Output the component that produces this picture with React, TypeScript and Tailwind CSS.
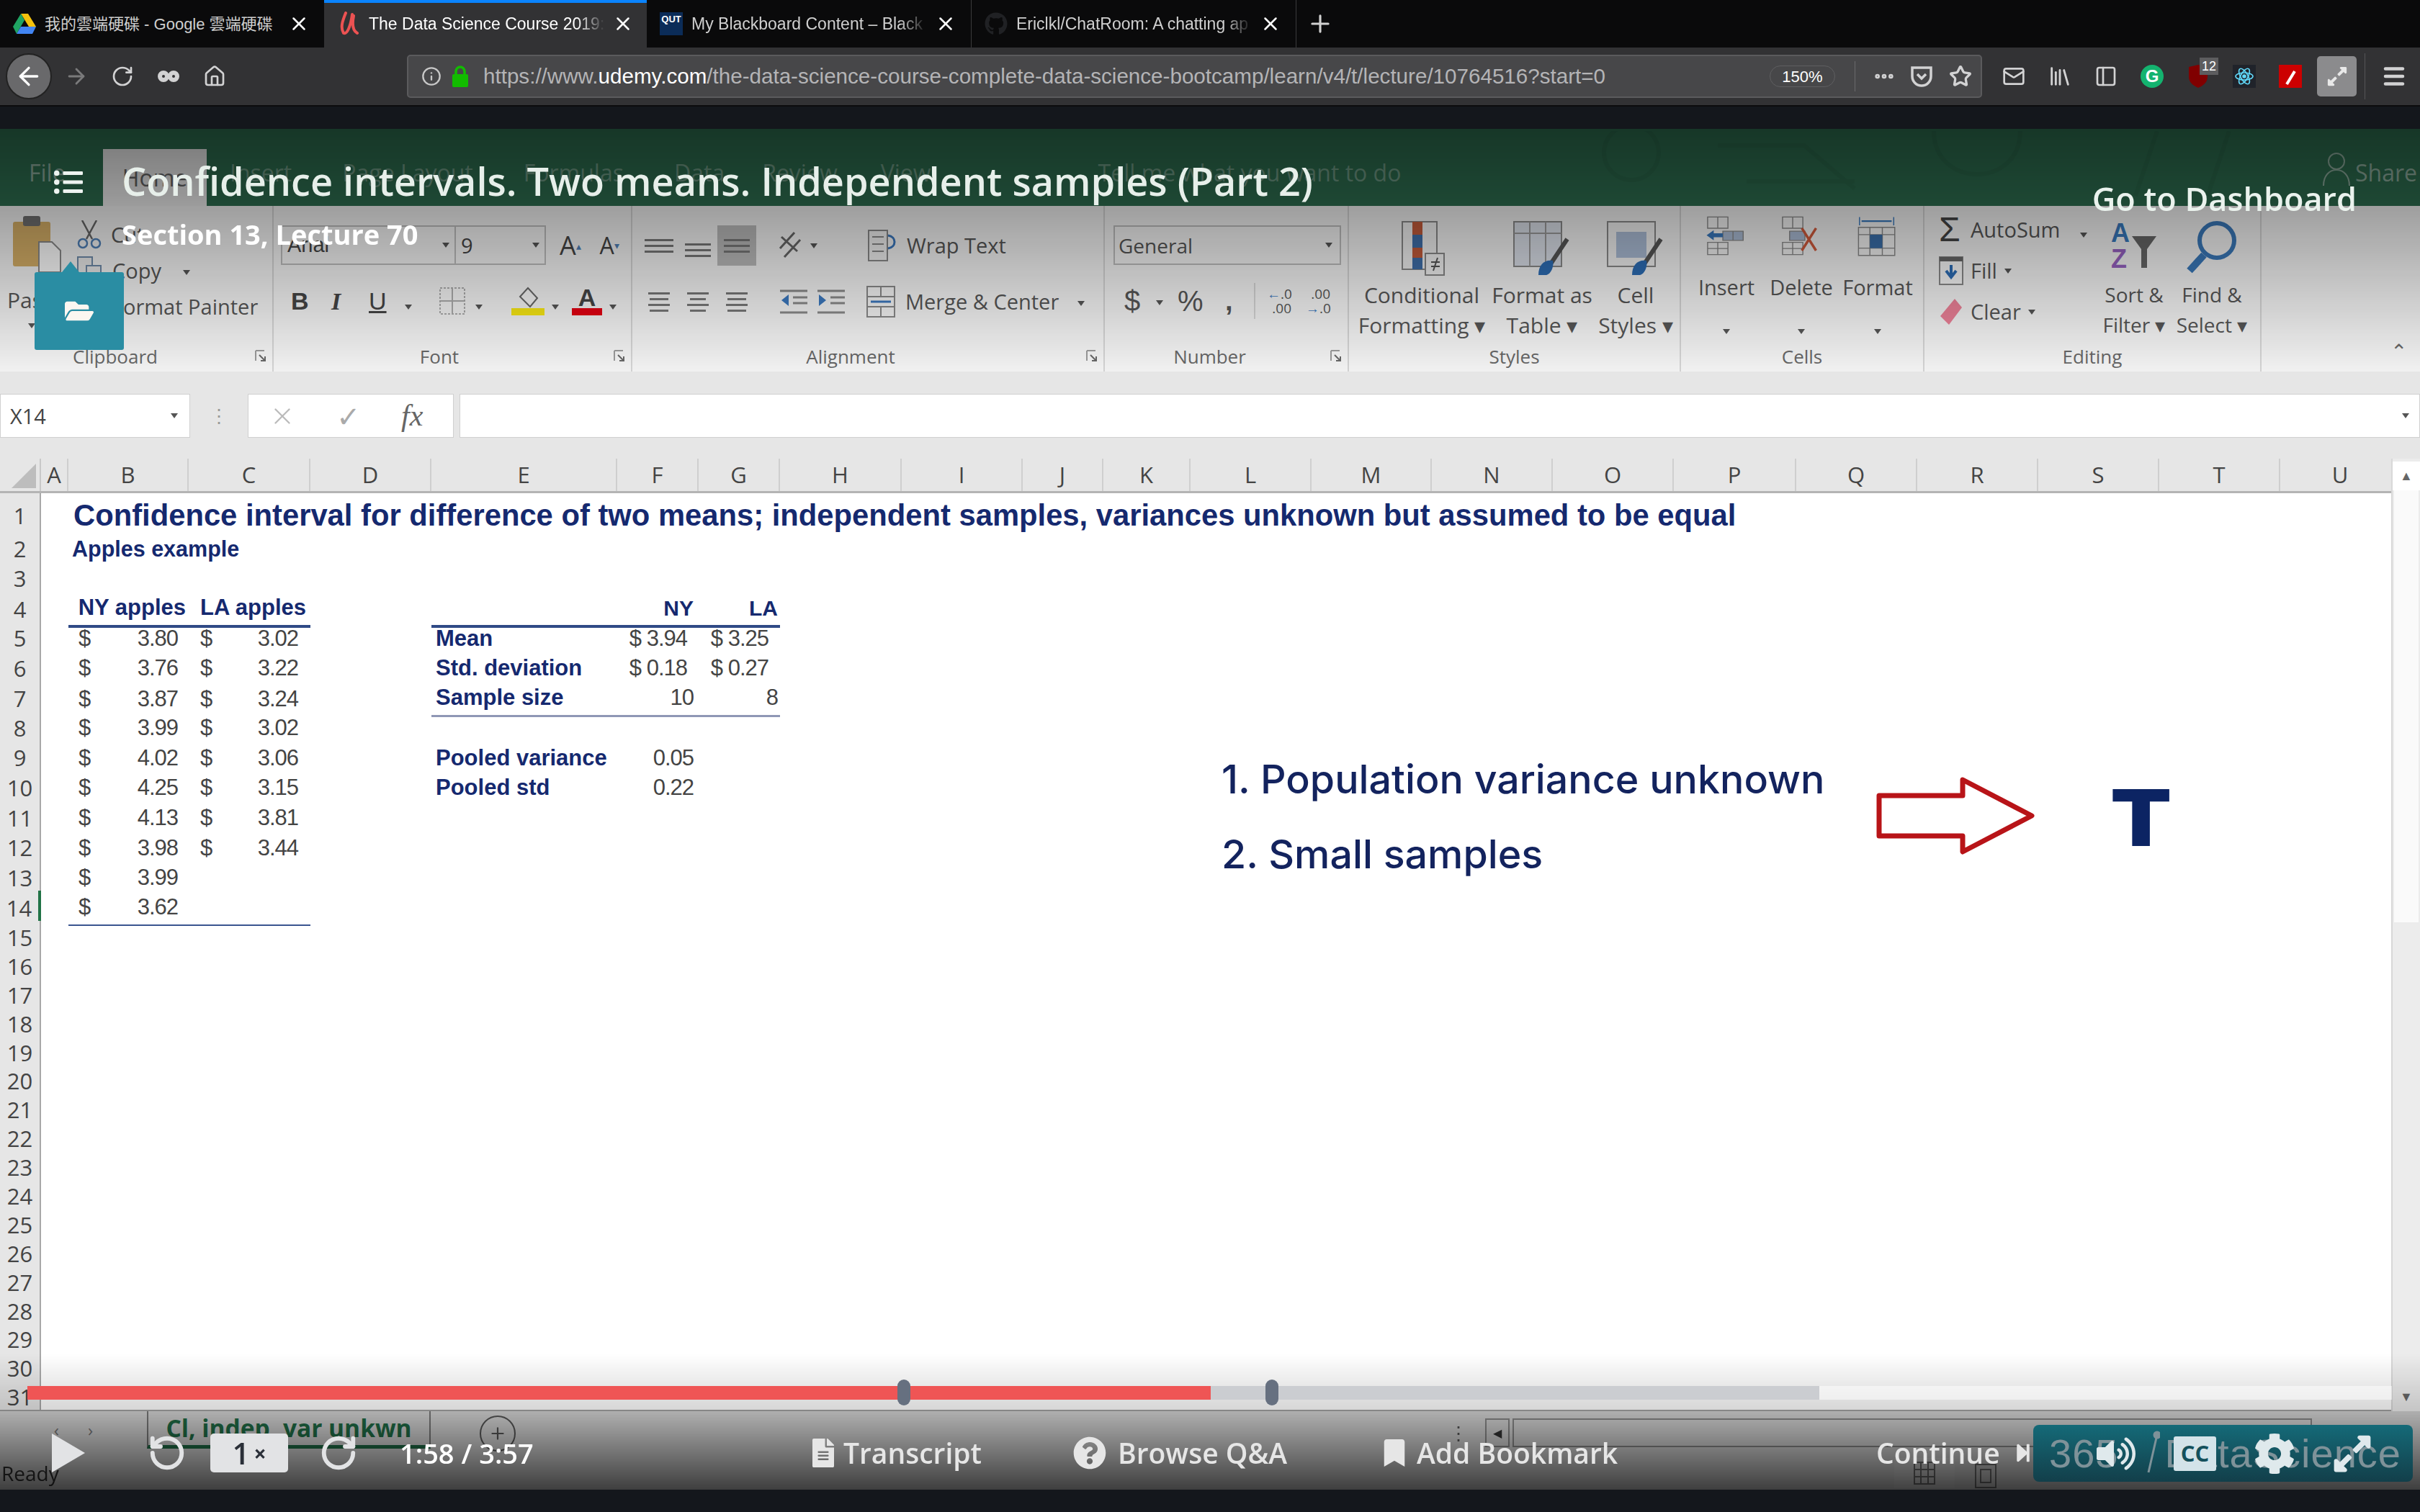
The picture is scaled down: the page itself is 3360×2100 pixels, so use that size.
import type { ReactNode } from 'react';
import { ArrowLeft, ArrowRight, Ellipsis, Home, Info, Library, Mail, Menu, PanelLeft, Plus, RotateCcw, RotateCw, Star, X } from 'lucide-react';
import { FaBookmark, FaCog, FaExpandAlt, FaFileAlt, FaFolderOpen, FaGithub, FaListUl, FaQuestionCircle, FaStepForward, FaVolumeUp } from 'react-icons/fa';

const COLS = 'grid-cols-[57px_38px_167px_169px_168px_258px_113px_113px_1fr]';

const colHeads = [
  ['A', 'w-[38px]'], ['B', 'w-[167px]'], ['C', 'w-[169px]'], ['D', 'w-[168px]'], ['E', 'w-[258px]'], ['F', 'w-[113px]'], ['G', 'w-[113px]'],
  ['H', 'w-[169px]'], ['I', 'w-[168px]'], ['J', 'w-[112px]'], ['K', 'w-[121px]'], ['L', 'w-[168px]'], ['M', 'w-[167px]'], ['N', 'w-[168px]'],
  ['O', 'w-[168px]'], ['P', 'w-[170px]'], ['Q', 'w-[168px]'], ['R', 'w-[168px]'], ['S', 'w-[168px]'], ['T', 'w-[168px]'], ['U', 'w-[168px]'],
];

const apples = [
  ['3.80', '3.02'], ['3.76', '3.22'], ['3.87', '3.24'], ['3.99', '3.02'], ['4.02', '3.06'],
  ['4.25', '3.15'], ['4.13', '3.81'], ['3.98', '3.44'], ['3.99', ''], ['3.62', ''],
];

const stats: Record<number, string[]> = {
  5: ['Mean', '$ 3.94', '$ 3.25'],
  6: ['Std. deviation', '$ 0.18', '$ 0.27'],
  7: ['Sample size', '10', '8'],
  9: ['Pooled variance', '0.05', ''],
  10: ['Pooled std', '0.22', ''],
};

const rowHeights = (n: number) => {
  if (n === 1) return 'h-[54px] pb-[6px]';
  if (n === 4) return 'h-[42px]';
  if (n < 4) return 'h-[41px]';
  if (n < 15) return 'h-[41.6px]';
  return 'h-[39.9px]';
};

function Caret() {
  return <span className="inline-block w-0 h-0 border-x-[5px] border-x-transparent border-t-[7px] border-t-[#555]" />;
}

function Lines({ rows, active }: { rows: string[]; active?: boolean }) {
  return (
    <div className={`w-[54px] h-[56px] flex flex-col justify-center gap-[5px] items-center ${active ? 'bg-[#b9b9b9]' : ''}`}>
      {rows.map((r, i) => (
        <div key={i} className={`h-[3px] bg-[#777] ${r}`} />
      ))}
    </div>
  );
}

function GroupLabel({ name, launcher, cls }: { name: string; launcher?: boolean; cls?: string }) {
  return (
    <div className="h-[42px] relative flex items-center justify-center text-[26px] text-[#666]">
      <span className={cls}>{name}</span>
      {launcher && (
        <svg className="absolute right-[8px] top-[12px]" width="16" height="18" viewBox="0 0 16 18">
          <path d="M1 1h12M1 1v14" stroke="#999" strokeWidth="2" fill="none" />
          <path d="M6 7l8 8M14 9v6H8" stroke="#666" strokeWidth="2" fill="none" />
        </svg>
      )}
    </div>
  );
}

function Group({ w, children, name, launcher, cls }: { w: string; children: ReactNode; name: string; launcher?: boolean; cls?: string }) {
  return (
    <div className={`${w} h-full flex flex-col border-r-2 border-[#d2d2d2]`}>
      <div className="flex-1 min-h-0">{children}</div>
      <GroupLabel name={name} launcher={launcher} cls={cls} />
    </div>
  );
}

function Clipboard() {
  return (
    <div className="h-full flex">
      <div className="w-[100px] pl-[14px] pt-[12px] flex flex-col">
        <svg width="76" height="90" viewBox="0 0 76 90">
          <rect x="4" y="10" width="52" height="62" rx="3" fill="#d3ad66" />
          <rect x="18" y="2" width="24" height="14" rx="3" fill="#6f6f6f" />
          <path d="M40 38h18l12 12v30H40z" fill="#fafafa" stroke="#888" strokeWidth="2" />
        </svg>
        <span className="text-[30px] leading-[34px] mt-[12px] -ml-[4px] text-[#555]">Paste</span>
        <span className="ml-[25px] mt-[8px] leading-none"><Caret /></span>
      </div>
      <div className="pt-[18px] pl-[6px] flex flex-col gap-[6px]">
        <div className="h-[44px] flex items-center gap-[12px]">
          <svg width="36" height="40" viewBox="0 0 36 40" fill="none" stroke="#666" strokeWidth="2.5">
            <path d="M8 0l14 26M28 0L14 26" />
            <circle cx="9" cy="32" r="6" stroke="#4f7fb5" />
            <circle cx="27" cy="32" r="6" stroke="#4f7fb5" />
          </svg>
          <span className="text-[29px] text-[#555]">Cut</span>
        </div>
        <div className="h-[44px] flex items-center gap-[14px]">
          <svg width="36" height="42" viewBox="0 0 36 42" fill="#e8e8e8" stroke="#6f8aa8" strokeWidth="2">
            <rect x="2" y="2" width="20" height="26" />
            <rect x="14" y="14" width="20" height="26" />
          </svg>
          <span className="text-[29px] text-[#555]">Copy</span>
          <span className="ml-[16px]"><Caret /></span>
        </div>
        <div className="h-[44px] flex items-center gap-[14px]">
          <svg width="36" height="42" viewBox="0 0 36 42" fill="none" stroke="#666" strokeWidth="4">
            <path d="M8 36L28 6" />
          </svg>
          <span className="text-[29px] text-[#555]">Format Painter</span>
        </div>
      </div>
    </div>
  );
}

function FontGroup() {
  return (
    <div className="h-full pt-[27px] pl-[10px] flex flex-col text-[#444]">
      <div className="flex items-center h-[55px]">
        <div className="w-[243px] h-full border-2 border-[#bbb] flex items-center justify-between px-[7px]">
          <span className="text-[29px] font-['Liberation_Sans']">Arial</span>
          <Caret />
        </div>
        <div className="w-[125px] h-full border-2 border-l-0 border-[#bbb] flex items-center justify-between px-[7px]">
          <span className="text-[29px]">9</span>
          <Caret />
        </div>
        <span className="ml-[12px] w-[44px] text-[36px] text-center">A<sup className="text-[#4f7fb5] text-[14px]">▴</sup></span>
        <span className="ml-[10px] w-[44px] text-[32px] text-center">A<sup className="text-[#4f7fb5] text-[14px]">▾</sup></span>
      </div>
      <div className="flex items-center h-[50px] mt-[25px] font-['Liberation_Sans'] text-[34px]">
        <span className="ml-[14px] w-[36px] font-bold">B</span>
        <span className="ml-[20px] w-[30px] italic font-['Liberation_Serif'] font-bold">I</span>
        <span className="ml-[22px] w-[24px] underline">U</span>
        <span className="ml-[26px]"><Caret /></span>
        <svg className="ml-[38px]" width="36" height="38" viewBox="0 0 36 38" fill="none" stroke="#aaa" strokeWidth="2">
          <rect x="1" y="1" width="34" height="36" strokeDasharray="3 2" />
          <path d="M18 1v36M1 19h34" />
        </svg>
        <span className="ml-[14px]"><Caret /></span>
        <div className="ml-[40px] w-[46px] flex flex-col items-center">
          <svg width="34" height="30" viewBox="0 0 34 30" fill="#f2f2f2" stroke="#666" strokeWidth="2">
            <path d="M17 2l13 14-10 12L6 14z" />
          </svg>
          <div className="w-[46px] h-[10px] bg-[#f4e414]" />
        </div>
        <span className="ml-[10px]"><Caret /></span>
        <div className="ml-[18px] w-[42px] flex flex-col items-center leading-[30px] font-bold">
          <span>A</span>
          <div className="w-[42px] h-[10px] bg-[#e00012]" />
        </div>
        <span className="ml-[10px]"><Caret /></span>
      </div>
    </div>
  );
}

function Alignment() {
  return (
    <div className="h-full pt-[27px] pl-[10px] flex text-[#444]">
      <div className="w-[175px] flex flex-col">
        <div className="flex h-[56px] -ml-[10px] pl-[10px]">
          <div className="pb-[14px]"><Lines rows={['w-[40px]', 'w-[40px]', 'w-[40px]']} /></div>
          <div className="pt-[6px]"><Lines rows={['w-[36px]', 'w-[36px]', 'w-[36px]']} /></div>
          <Lines active rows={['w-[36px]', 'w-[36px]', 'w-[36px]']} />
        </div>
        <div className="flex h-[50px] mt-[25px] items-center">
          <Lines rows={['w-[30px]', 'w-[26px]', 'w-[30px]', 'w-[26px]']} />
          <Lines rows={['w-[30px]', 'w-[22px]', 'w-[30px]', 'w-[22px]']} />
          <Lines rows={['w-[30px]', 'w-[26px]', 'w-[30px]', 'w-[26px]']} />
        </div>
      </div>
      <div className="w-[110px] flex flex-col">
        <div className="h-[56px] flex items-center gap-[8px] pl-[14px]">
          <svg width="40" height="44" viewBox="0 0 40 44" fill="none" stroke="#666" strokeWidth="3">
            <path d="M6 26L26 4M12 38L34 14M8 10l22 20" />
          </svg>
          <Caret />
        </div>
        <div className="h-[50px] mt-[25px] flex items-center pl-[20px] gap-[14px]">
          <svg width="38" height="36" viewBox="0 0 38 36" stroke="#888" strokeWidth="3" fill="none"><path d="M0 3h38M18 12h20M18 20h20M0 33h38" /><path d="M12 8L2 16l10 8z" fill="#3b77bc" stroke="none" /></svg>
          <svg width="38" height="36" viewBox="0 0 38 36" stroke="#888" strokeWidth="3" fill="none"><path d="M0 3h38M18 12h20M18 20h20M0 33h38" /><path d="M2 8l10 8-10 8z" fill="#3b77bc" stroke="none" /></svg>
        </div>
      </div>
      <div className="flex flex-col">
        <div className="h-[56px] flex items-center gap-[14px] pl-[32px]">
          <svg width="40" height="44" viewBox="0 0 40 44" fill="#eee" stroke="#888" strokeWidth="2">
            <rect x="1" y="1" width="26" height="42" />
            <path d="M6 10h16M6 20h16M6 30h16" />
            <path d="M28 8c12 2 12 16 0 18" fill="none" stroke="#3b77bc" strokeWidth="3" />
          </svg>
          <span className="text-[29px] text-[#555]">Wrap Text</span>
        </div>
        <div className="h-[50px] mt-[25px] flex items-center gap-[14px] pl-[30px]">
          <svg width="40" height="44" viewBox="0 0 40 44" fill="none" stroke="#888" strokeWidth="2">
            <rect x="1" y="1" width="38" height="42" />
            <path d="M1 15h38M1 29h38M20 1v14M20 29v14" />
            <path d="M6 22h28" stroke="#3b77bc" strokeWidth="3" />
          </svg>
          <span className="text-[29px] text-[#555]">Merge &amp; Center</span>
          <span className="ml-[12px]"><Caret /></span>
        </div>
      </div>
    </div>
  );
}

function NumberGroup() {
  return (
    <div className="h-full pt-[27px] pl-[9px] flex flex-col text-[#555]">
      <div className="w-[316px] h-[55px] ml-[3px] border-2 border-[#bbb] flex items-center justify-between pl-[5px] pr-[10px]">
        <span className="text-[28px]">General</span>
        <Caret />
      </div>
      <div className="flex items-center h-[50px] mt-[25px]">
        <span className="ml-[18px] w-[28px] text-[40px] font-['Liberation_Sans']">$</span>
        <span className="ml-[16px]"><Caret /></span>
        <span className="ml-[20px] w-[36px] text-[40px] font-['Liberation_Sans']">%</span>
        <span className="ml-[30px] w-[20px] text-[38px] font-bold font-['Liberation_Sans']">,</span>
        <div className="ml-[20px] h-[50px] border-l-2 border-[#d2d2d2]" />
        <div className="ml-[16px] w-[34px] text-[19px] leading-[20px] text-right"><span className="text-[#3b77bc]">←</span>.0<br />.00</div>
        <div className="ml-[20px] w-[34px] text-[19px] leading-[20px] text-right">.00<br /><span className="text-[#3b77bc]">→</span>.0</div>
      </div>
    </div>
  );
}

function StylesGroup() {
  const btn = 'flex flex-col items-center text-[30px] leading-[42px] whitespace-nowrap text-[#555]';
  return (
    <div className="h-full pt-[20px] pl-[6px] flex">
      <div className={`${btn} w-[190px]`}>
        <svg className="mb-[5px]" width="82" height="78" viewBox="0 0 82 78">
          <rect x="14" y="2" width="48" height="66" fill="#eee" stroke="#888" strokeWidth="2" />
          <rect x="28" y="2" width="14" height="18" fill="#c25b3a" />
          <rect x="28" y="20" width="14" height="18" fill="#3f6ea8" />
          <rect x="28" y="38" width="14" height="14" fill="#c25b3a" />
          <rect x="28" y="52" width="14" height="16" fill="#3f6ea8" />
          <rect x="46" y="46" width="26" height="30" fill="#f0f0f0" stroke="#888" strokeWidth="2" />
          <path d="M54 58h12M54 64h12M63 52l-6 18" stroke="#555" strokeWidth="2" />
        </svg>
        <span>Conditional</span>
        <span>Formatting ▾</span>
      </div>
      <div className={`${btn} w-[144px]`}>
        <svg className="mb-[5px]" width="82" height="78" viewBox="0 0 82 78">
          <rect x="2" y="2" width="66" height="62" fill="#d8dde6" stroke="#888" strokeWidth="2" />
          <path d="M2 18h66M24 2v62M46 2v62" stroke="#999" strokeWidth="2" />
          <path d="M76 26L52 62" stroke="#555" strokeWidth="6" />
          <path d="M36 76c0-14 8-22 20-20 2 10-4 20-10 20z" fill="#2d6cb3" />
        </svg>
        <span>Format as</span>
        <span>Table ▾</span>
      </div>
      <div className={`${btn} w-[116px]`}>
        <svg className="mb-[5px]" width="82" height="78" viewBox="0 0 82 78">
          <rect x="2" y="2" width="66" height="62" fill="#eee" stroke="#888" strokeWidth="2" />
          <rect x="14" y="16" width="42" height="36" fill="#a9bad3" />
          <path d="M76 26L52 62" stroke="#555" strokeWidth="6" />
          <path d="M36 76c0-14 8-22 20-20 2 10-4 20-10 20z" fill="#2d6cb3" />
        </svg>
        <span>Cell</span>
        <span>Styles ▾</span>
      </div>
    </div>
  );
}

function CellsGroup() {
  const btn = 'flex flex-col items-center text-[29px] text-[#555]';
  return (
    <div className="h-full pt-[14px] pl-[13px] flex">
      <div className={`${btn} w-[100px]`}>
        <svg className="mb-[22px]" width="78" height="78" viewBox="0 0 78 78" fill="none" stroke="#888" strokeWidth="2">
          <path d="M2 2h40v22H2zM22 2v22M2 52h40v24H2zM2 64h40M22 52v24" />
          <path d="M32 30h40v18H32zM52 30v18" fill="#a9bad3" />
          <path d="M0 38l14-10v6h18v8H14v6z" fill="#3877bb" stroke="none" />
        </svg>
        <span>Insert</span>
        <span className="mt-[10px]"><Caret /></span>
      </div>
      <div className={`${btn} w-[108px]`}>
        <svg className="mb-[22px]" width="78" height="78" viewBox="0 0 78 78" fill="none" stroke="#888" strokeWidth="2">
          <path d="M2 2h40v22H2zM22 2v22M2 52h40v24H2zM2 64h40M22 52v24" />
          <path d="M16 30h30v18H16z" fill="#a9bad3" />
          <path d="M40 24l28 44M68 24L40 68" stroke="#cf5a3c" strokeWidth="5" />
        </svg>
        <span>Delete</span>
        <span className="mt-[10px]"><Caret /></span>
      </div>
      <div className={`${btn} w-[104px]`}>
        <svg className="mb-[18px]" width="78" height="82" viewBox="0 0 78 82" fill="none" stroke="#888" strokeWidth="2">
          <path d="M4 2v16M70 2v16" stroke="#3877bb" />
          <path d="M8 10h58" stroke="#3877bb" strokeWidth="3" />
          <path d="M2 22h70v54H2zM2 36h70M2 62h70M24 22v54M48 22v54" />
          <rect x="24" y="36" width="24" height="26" fill="#3a6ea9" stroke="none" />
        </svg>
        <span>Format</span>
        <span className="mt-[10px]"><Caret /></span>
      </div>
    </div>
  );
}

function EditingGroup() {
  const btn = 'flex flex-col items-center text-[28px] leading-[42px] whitespace-nowrap text-[#555]';
  return (
    <div className="h-full flex">
      <div className="w-[238px] pt-[10px] pl-[20px] flex flex-col gap-[11px] text-[29px] text-[#555]">
        <div className="h-[46px] flex items-center gap-[10px]">
          <span className="w-[34px] text-[48px] leading-none text-[#444] font-['Liberation_Sans']">Σ</span>
          <span>AutoSum</span>
          <span className="ml-[18px]"><Caret /></span>
        </div>
        <div className="h-[46px] flex items-center gap-[10px]">
          <svg width="34" height="40" viewBox="0 0 34 40"><rect x="1" y="1" width="32" height="38" fill="#f4f4f4" stroke="#888" strokeWidth="2" /><rect x="1" y="1" width="32" height="6" fill="#666" /><path d="M17 12v14M10 20l7 9 7-9" stroke="#2d6cb3" strokeWidth="4" fill="none" /></svg>
          <span>Fill</span>
          <Caret />
        </div>
        <div className="h-[46px] flex items-center gap-[10px]">
          <svg width="34" height="40" viewBox="0 0 34 40"><path d="M22 2l10 12-18 24L2 26z" fill="#e87f95" /></svg>
          <span>Clear</span>
          <Caret />
        </div>
      </div>
      <div className={`${btn} w-[106px] pt-[20px]`}>
        <div className="h-[74px] mb-[8px] flex items-start gap-[2px] font-['Liberation_Sans'] font-bold text-[36px] leading-[36px]">
          <div className="flex flex-col"><span className="text-[#3878bb]">A</span><span className="text-[#9561bf]">Z</span></div>
          <svg className="mt-[20px]" width="36" height="48" viewBox="0 0 36 48"><path d="M1 2h34L22 20v26h-8V20z" fill="#666" /></svg>
        </div>
        <span>Sort &amp;</span>
        <span>Filter ▾</span>
      </div>
      <div className={`${btn} w-[110px] pt-[18px]`}>
        <svg className="mb-[8px]" width="74" height="76" viewBox="0 0 74 76" fill="none" stroke="#3a78b8">
          <circle cx="44" cy="30" r="24" strokeWidth="6" />
          <path d="M26 50L6 72" strokeWidth="10" />
        </svg>
        <span>Find &amp;</span>
        <span>Select ▾</span>
      </div>
    </div>
  );
}

function Ribbon() {
  return (
    <div className="h-[230px] flex bg-[#f1f1f1] font-['Open_Sans']">
      <Group w="w-[380px]" name="Clipboard" launcher cls="mr-[58px]"><Clipboard /></Group>
      <Group w="w-[498px]" name="Font" launcher cls="mr-[36px]"><FontGroup /></Group>
      <Group w="w-[656px]" name="Alignment" launcher cls="mr-[48px]"><Alignment /></Group>
      <Group w="w-[339px]" name="Number" launcher cls="mr-[46px]"><NumberGroup /></Group>
      <Group w="w-[461px]" name="Styles"><StylesGroup /></Group>
      <Group w="w-[338px]" name="Cells"><CellsGroup /></Group>
      <Group w="w-[468px]" name="Editing"><EditingGroup /></Group>
      <div className="flex-1 relative">
        <span className="absolute right-[18px] bottom-[8px] text-[28px] text-[#666]">⌃</span>
      </div>
    </div>
  );
}

function FormulaBar() {
  return (
    <div className="h-[121px] bg-[#e6e6e6] pt-[31px] font-['Open_Sans']">
      <div className="h-[61px] flex items-stretch">
        <div className="w-[264px] bg-white border border-[#d0d0d0] flex items-center justify-between pl-[13px] pr-[16px]">
          <span className="text-[29px] text-[#444]">X14</span>
          <Caret />
        </div>
        <div className="w-[80px] flex items-center justify-center text-[26px] text-[#999]">⋮</div>
        <div className="w-[286px] bg-white border border-[#d0d0d0] flex items-center pl-[28px] gap-[56px] text-[#aaa]">
          <X size={38} strokeWidth={1.5} color="#bbb" />
          <span className="text-[40px] leading-none">✓</span>
          <span className="text-[42px] italic font-['Liberation_Serif'] text-[#666]">fx</span>
        </div>
        <div className="w-[8px]" />
        <div className="flex-1 bg-white border border-[#d0d0d0] flex items-center justify-end pr-[14px]">
          <Caret />
        </div>
      </div>
    </div>
  );
}

function SheetRow({ n }: { n: number }) {
  const i = n - 5;
  const row = i >= 0 && i < apples.length ? apples[i] : null;
  const stat = stats[n];
  return (
    <div className={`grid ${COLS} ${rowHeights(n)}`}>
      <div className={`flex items-center justify-center bg-[#e6e6e6] border-b border-[#bdbdbd] font-['Open_Sans'] text-[31px] text-[#444] ${n === 14 ? 'bg-[#d5e2d8] border-r-4 border-r-[#217346]' : 'border-r-2 border-r-[#a8a8a8]'}`}>{n}</div>
      <div />
      <div className={`flex items-center whitespace-nowrap relative ${n === 4 ? 'border-b-4 border-[#2f4a86] justify-end pr-[4px]' : ''} ${n === 14 ? 'border-b-2 border-[#3a5590]' : ''}`}>
        {n === 1 && <span className="ml-[7px] text-[#15296f] font-bold text-[41.75px]">Confidence interval for difference of two means; independent samples, variances unknown but assumed to be equal</span>}
        {n === 2 && <span className="ml-[5px] text-[#15296f] font-bold text-[30.5px]">Apples example</span>}
        {n === 4 && <span className="text-[#15296f] font-bold text-[31px]">NY apples</span>}
        {row && (
          <div className="w-full flex justify-between pl-[14px] pr-[15px] text-[31px] text-[#444] tracking-[-1px]">
            <span>$</span>
            <span>{row[0]}</span>
          </div>
        )}
      </div>
      <div className={`flex items-center whitespace-nowrap ${n === 4 ? 'border-b-4 border-[#2f4a86] justify-end pr-[6px]' : ''} ${n === 14 ? 'border-b-2 border-[#3a5590]' : ''}`}>
        {n === 4 && <span className="text-[#15296f] font-bold text-[31px]">LA apples</span>}
        {row && row[1] && (
          <div className="w-full flex justify-between pl-[16px] pr-[17px] text-[31px] text-[#444] tracking-[-1px]">
            <span>$</span>
            <span>{row[1]}</span>
          </div>
        )}
      </div>
      <div />
      <div className={`flex items-center ${n === 4 ? 'border-b-4 border-[#2f4a86]' : ''} ${n === 7 ? 'border-b-[3px] border-[#8f97b5]' : ''}`}>
        {stat && <span className="ml-[6px] text-[#15296f] font-bold text-[31px] whitespace-nowrap">{stat[0]}</span>}
      </div>
      <div className={`flex items-center justify-end ${n === 4 ? 'border-b-4 border-[#2f4a86] pr-[7px]' : ''} ${n === 7 ? 'border-b-[3px] border-[#8f97b5] pr-[7px]' : ''} ${n === 5 || n === 6 ? 'pr-[16px]' : ''} ${n === 9 || n === 10 ? 'pr-[7px]' : ''}`}>
        {n === 4 && <span className="text-[#15296f] font-bold text-[30px]">NY</span>}
        {stat && <span className="text-[31px] text-[#444] tracking-[-1px] whitespace-nowrap">{stat[1]}</span>}
      </div>
      <div className={`w-[113px] flex items-center justify-end ${n === 4 ? 'border-b-4 border-[#2f4a86] pr-[3px]' : ''} ${n === 7 ? 'border-b-[3px] border-[#8f97b5] pr-[3px]' : ''} ${n === 5 || n === 6 ? 'pr-[16px]' : ''}`}>
        {n === 4 && <span className="text-[#15296f] font-bold text-[30px]">LA</span>}
        {stat && stat[2] && <span className="text-[31px] text-[#444] tracking-[-1px] whitespace-nowrap">{stat[2]}</span>}
      </div>
      <div />
    </div>
  );
}

function Sheet() {
  const rows = Array.from({ length: 31 }, (_, k) => k + 1);
  return (
    <div className="h-[1323px] flex relative font-['Liberation_Sans']">
      <div className="flex-1 flex flex-col min-w-0 border-b-2 border-[#a0a0a0]">
        <div className="h-[48px] flex overflow-hidden bg-[#e6e6e6] border-b-[3px] border-[#b4b4b4] font-['Open_Sans'] text-[31px] text-[#444]">
          <div className="w-[57px] shrink-0 flex items-end justify-end pr-[5px] pb-[4px] border-r-2 border-[#c8c8c8]">
            <div className="w-0 h-0 border-l-[34px] border-l-transparent border-b-[34px] border-b-[#bdbdbd]" />
          </div>
          {colHeads.map(([label, w]) => (
            <div key={label} className={`${w} shrink-0 flex items-center justify-center border-r-2 border-[#cfcfcf]`}>{label}</div>
          ))}
        </div>
        <div className="flex-1 overflow-hidden bg-white">
          {rows.map((n) => (
            <SheetRow key={n} n={n} />
          ))}
        </div>
      </div>
      <div className="w-[40px] flex flex-col bg-[#ececec] border-l-2 border-[#d8d8d8]">
        <div className="h-[40px] mt-[4px] flex items-center justify-center bg-white text-[18px] text-[#666]">▲</div>
        <div className="h-[600px] bg-[#fafafa] mx-[2px]" />
        <div className="flex-1" />
        <div className="h-[40px] flex items-center justify-center text-[18px] text-[#666]">▼</div>
      </div>

      {/* slide callout drawn over the sheet */}
      <div className="absolute left-[1696px] top-[419px] flex flex-col gap-[52px] font-['Inter'] font-medium text-[#13235e] text-[55.5px] leading-[52px] whitespace-nowrap">
        <span>1. Population variance unknown</span>
        <span>2. Small samples</span>
      </div>
      <svg className="absolute left-[2603px] top-[440px]" width="224" height="112" viewBox="0 0 224 112">
        <path d="M6 28h116V6l96 50-96 50V84H6z" fill="none" stroke="#b81418" strokeWidth="7" strokeLinejoin="round" />
      </svg>
      <span className="absolute left-[2930px] top-[444px] font-['Inter'] font-black text-[#0c2463] text-[108px] leading-[110px] scale-x-[1.15] origin-left">T</span>
    </div>
  );
}

function SheetTabs() {
  return (
    <div className="flex-1 bg-[#d2d2d2] font-['Open_Sans'] relative">
      <div className="h-[52px] flex items-stretch">
        <div className="w-[204px] flex items-center justify-center gap-[40px] text-[#777] text-[24px]">
          <span>‹</span><span>›</span>
        </div>
        <div className="w-[394px] border-x-2 border-[#777] border-b-[5px] border-b-[#1f6b45] flex items-center justify-center text-[33.5px] font-bold text-[#1f6b45] whitespace-nowrap">
          Cl, indep, var unkwn
        </div>
        <div className="ml-[68px] mt-[6px] w-[50px] h-[50px] rounded-full border-2 border-[#555] flex items-center justify-center">
          <Plus size={26} color="#555" />
        </div>
        <div className="ml-[1296px] mt-[10px] text-[#555] text-[26px] leading-[40px]">⋮</div>
        <div className="ml-[24px] mt-[10px] w-[34px] h-[40px] border-2 border-[#888] flex items-center justify-center text-[16px] text-[#333]">◀</div>
        <div className="ml-[4px] mt-[10px] flex-1 mr-[150px] h-[40px] border-2 border-[#888]" />
      </div>
      <div className="h-[57px] flex items-end pb-[2px]">
        <span className="w-[2630px] text-[28px] text-[#333] pl-[2px]">Ready</span>
        <div className="w-[84px] h-[42px] bg-[#dcdcdc] flex items-center justify-center opacity-60">
          <svg width="30" height="32" viewBox="0 0 30 32" fill="none" stroke="#333" strokeWidth="2"><path d="M1 1h28v30H1zM10 1v30M20 1v30M1 11h28M1 21h28" /></svg>
        </div>
        <svg className="ml-[28px] opacity-60" width="30" height="34" viewBox="0 0 30 34" fill="none" stroke="#333" strokeWidth="2"><path d="M1 1h28v32H1z" /><path d="M8 8h14v18H8z" /></svg>
      </div>
    </div>
  );
}

function TitleBar() {
  const tabs = [
    ['Insert', 'ml-[32px]'], ['Page Layout', 'ml-[70px]'], ['Formulas', 'ml-[70px]'], ['Data', 'ml-[70px]'], ['Review', 'ml-[52px]'], ['View', 'ml-[60px]'],
  ];
  return (
    <div className="h-[107px] bg-[#2e6e50] flex items-end font-['Open_Sans'] text-[32px] text-[#6f9a85]">
      <span className="ml-[40px] w-[103px] h-[70px] text-[#8fae9f]">File</span>
      <div className="w-[144px] h-[79px] bg-[#ededed] text-[#666] flex items-center justify-center">Home</div>
      {tabs.map(([t, ml]) => (
        <span key={t} className={`${ml} h-[70px]`}>{t}</span>
      ))}
      <span className="ml-[232px] h-[70px]">Tell me what you want to do</span>
      <svg className="ml-[260px] mb-[4px] opacity-10" width="900" height="100" viewBox="0 0 900 100" fill="none" stroke="#163a2a" strokeWidth="6">
        <circle cx="60" cy="30" r="38" />
        <path d="M180 20h120l70 60M220 70h150M480 0c0 80 120 80 120 0M760 90l30-90M860 90l30-90" />
      </svg>
      <span className="ml-[auto] mr-[96px] h-[70px] flex items-start">
        <svg className="mt-[-6px]" width="40" height="50" viewBox="0 0 40 50" fill="none" stroke="#8fae9f" strokeWidth="2"><circle cx="20" cy="14" r="11" /><path d="M2 48c0-14 8-22 18-22s18 8 18 22" /></svg>
      </span>
      <span className="absolute right-[4px] h-[70px] text-[#8fae9f]">Share</span>
    </div>
  );
}

function BottomControls() {
  return (
    <div className="absolute bottom-0 inset-x-0 h-[153px] font-['Open_Sans'] text-[#e6e6e6]">
      <div className="relative mt-[9px] ml-[38px] mr-[39px] h-[19px] flex">
        <div className="w-[1643px] bg-[#ef5555]" />
        <div className="w-[845px] bg-[#cbcdd1]" />
        <div className="flex-1 bg-white/50" />
        <span className="absolute left-[1208px] top-[-9px] w-[18px] h-[36px] rounded-full bg-[#667080]" />
        <span className="absolute left-[1719px] top-[-9px] w-[18px] h-[36px] rounded-full bg-[#667080]" />
      </div>
      <div className="mt-[44px] h-[60px] flex items-center font-semibold text-[39px] whitespace-nowrap">
        <svg className="ml-[72px]" width="46" height="54" viewBox="0 0 46 54"><path d="M0 0l46 27L0 54z" fill="#e2e3e5" /></svg>
        <RotateCcw className="ml-[87px]" size={54} strokeWidth={2.6} color="#e2e3e5" />
        <div className="ml-[33px] w-[108px] h-[54px] bg-[#e2e3e5] rounded-[5px] flex items-center justify-center text-[#2a2f38] gap-[6px]">
          <span className="text-[42px] leading-none">1</span><span className="text-[30px] font-bold">×</span>
        </div>
        <RotateCw className="ml-[43px]" size={54} strokeWidth={2.6} color="#e2e3e5" />
        <span className="ml-[58px] w-[568px] text-white text-[38px]">1:58 / 3:57</span>
        <div className="w-[367px] flex items-center gap-[8px]">
          <FaFileAlt size={40} />
          <span>Transcript</span>
        </div>
        <div className="w-[427px] flex items-center gap-[16px]">
          <FaQuestionCircle size={46} />
          <span>Browse Q&amp;A</span>
        </div>
        <div className="w-[688px] flex items-center gap-[12px]">
          <FaBookmark size={38} />
          <span>Add Bookmark</span>
        </div>
        <span>Continue</span>
        <FaStepForward className="ml-[18px]" size={28} />
      </div>
      {/* player tools box */}
      <div className="absolute right-[10px] bottom-[11px] w-[527px] h-[79px] rounded-[8px] bg-gradient-to-b from-[#146a78] to-[#123f4a] flex items-center">
        <div className="absolute left-[22px] top-[4px] flex items-center text-[56px] leading-[72px] font-['Liberation_Sans'] text-[#7e9299] tracking-[1px] whitespace-nowrap">
          <span>365</span>
          <svg className="ml-[38px] mr-[6px]" width="20" height="72" viewBox="0 0 20 72" fill="none" stroke="#7e9299" strokeWidth="3">
            <circle cx="16" cy="10" r="4" fill="#7e9299" />
            <path d="M15 14L4 62" />
          </svg>
          <span>DataScience</span>
        </div>
        <FaVolumeUp className="relative ml-[88px]" size={54} color="#dfe9ec" />
        <div className="relative ml-[53px] w-[59px] h-[48px] bg-[#d3e3e9] rounded-[3px] flex items-center justify-center text-[31px] font-bold text-[#14505c]">CC</div>
        <FaCog className="relative ml-[52px]" size={58} color="#dfe9ec" />
        <FaExpandAlt className="relative ml-[50px]" size={58} color="#dfe9ec" />
      </div>
    </div>
  );
}

function VideoOverlay() {
  return (
    <>
      <div className="absolute top-0 inset-x-0 h-[337px] bg-gradient-to-b from-black/50 to-transparent" />
      <div className="absolute bottom-0 inset-x-0 h-[189px] bg-[linear-gradient(to_bottom,transparent,rgba(0,0,0,0.16)_42%,rgba(0,0,0,0.7))]" />
      <div className="absolute top-0 inset-x-0 flex justify-between font-['Open_Sans'] text-white">
        <div className="flex items-start">
          <FaListUl className="ml-[75px] mt-[54px] text-[#eef3f0]" size={40} />
          <div className="ml-[54px] flex flex-col">
            <span className="mt-[30px] text-[54px] leading-[84px] font-semibold text-[#e7efea] whitespace-nowrap">Confidence intervals. Two means. Independent samples (Part 2)</span>
            <span className="mt-[7px] text-[38px] leading-[50px] font-bold whitespace-nowrap">Section 13, Lecture 70</span>
          </div>
        </div>
        <span className="mr-[88px] mt-[66px] text-[45px] leading-[62px] font-semibold text-[#eaf2ed] whitespace-nowrap">Go to Dashboard</span>
      </div>
      <div className="absolute left-[48px] top-[199px] w-[124px] h-[108px] bg-[#2a8da3] rounded-[3px] flex items-center justify-center">
        <span className="absolute left-[38px] top-[-15px] w-0 h-0 border-x-[12px] border-x-transparent border-b-[15px] border-b-[#2a8da3]" />
        <FaFolderOpen size={40} color="#fbf7f1" />
      </div>
    </>
  );
}

function Video() {
  return (
    <div className="h-[1890px] relative overflow-hidden">
      <div className="h-full flex flex-col blur-[0.7px]">
        <TitleBar />
        <Ribbon />
        <FormulaBar />
        <Sheet />
        <SheetTabs />
      </div>
      <VideoOverlay />
      <BottomControls />
    </div>
  );
}

function Tab({ w, active, icon, title, divider, cls }: { w: string; active?: boolean; icon: ReactNode; title: string; divider?: boolean; cls: string }) {
  return (
    <div className={`${w} h-full relative flex items-center ${active ? 'bg-[#323234] text-white' : 'text-[#cfcfcf]'} ${divider ? 'border-l border-[#3a3a3c]' : ''}`}>
      {active && <div className="absolute top-0 inset-x-0 h-[4px] bg-[#0a84ff]" />}
      <div className="w-[62px] flex items-center justify-center pl-[6px]">{icon}</div>
      <span className={`w-[328px] whitespace-nowrap ${cls}`}>{title}</span>
      <X className="ml-[10px]" size={30} strokeWidth={2} color="#fff" />
    </div>
  );
}

const FADED = 'text-[23px] [mask-image:linear-gradient(to_right,black_88%,transparent)]';

function TabBar() {
  return (
    <div className="h-[66px] bg-[#0a0a0b] flex items-stretch font-['Liberation_Sans','Noto_Sans_CJK_TC',sans-serif]">
      <Tab
        w="w-[450px]"
        cls="text-[22px]"
        title="我的雲端硬碟 - Google 雲端硬碟"
        icon={
          <svg width="32" height="28" viewBox="0 0 32 28">
            <path d="M11 0h10l11 18H22z" fill="#f4c20d" />
            <path d="M11 0L0 18l5 10L16 9z" fill="#1fa463" />
            <path d="M5 28h22l5-10H11z" fill="#4285f4" />
          </svg>
        }
      />
      <Tab
        w="w-[448px]"
        active
        cls={FADED}
        title="The Data Science Course 2019:"
        icon={
          <svg width="28" height="34" viewBox="0 0 28 34" fill="none" stroke="#ec5252" strokeWidth="4" strokeLinecap="round">
            <path d="M10 2C6 12 2 22 7 30c5 2 10-10 12-26M21 6c-2 10-2 20 5 24" />
          </svg>
        }
      />
      <Tab
        w="w-[450px]"
        cls={FADED}
        title="My Blackboard Content – Black"
        icon={
          <div className="w-[32px] h-[32px] bg-[#0b2c58] text-white text-[13px] font-bold leading-[20px] text-center">QUT</div>
        }
      />
      <Tab w="w-[451px]" divider cls={FADED} title="Ericlkl/ChatRoom: A chatting ap" icon={<FaGithub size={32} color="#202124" />} />
      <div className="border-l border-[#3a3a3c] flex items-center pl-[14px]">
        <Plus size={38} strokeWidth={2} color="#d0d0d0" />
      </div>
    </div>
  );
}

function Slot({ children, cls }: { children: ReactNode; cls?: string }) {
  return <div className={`w-[64px] h-[64px] relative flex items-center justify-center text-[#d2d2d3] ${cls ?? ''}`}>{children}</div>;
}

function NavBar() {
  return (
    <div className="h-[82px] bg-[#323234] border-b-2 border-[#0c0c0d] flex items-center pl-[8px] font-['Liberation_Sans']">
      <div className="w-[64px] h-[64px] rounded-full bg-[#69696b] border-2 border-[#222] flex items-center justify-center">
        <ArrowLeft size={40} color="#fff" />
      </div>
      <Slot cls="ml-[2px]"><ArrowRight size={34} color="#7a7a7b" /></Slot>
      <Slot><RotateCw size={32} /></Slot>
      <Slot>
        <svg width="30" height="20" viewBox="0 0 30 20" fill="none" stroke="currentColor" strokeWidth="6">
          <circle cx="8" cy="10" r="5" /><circle cx="22" cy="10" r="5" />
        </svg>
      </Slot>
      <Slot><Home size={32} /></Slot>
      <div className="ml-[235px] w-[2187px] h-[60px] bg-[#474749] border-2 border-[#5b5b5d] rounded-[5px] flex items-center pl-[18px] pr-[12px]">
        <Info size={28} color="#c8c8c8" />
        <svg className="ml-[14px]" width="24" height="30" viewBox="0 0 24 30">
          <rect x="1" y="12" width="22" height="18" rx="2" fill="#12bc00" />
          <path d="M6 13V8a6 6 0 0 1 12 0v5" fill="none" stroke="#12bc00" strokeWidth="3.5" />
        </svg>
        <span className="ml-[20px] flex-1 text-[29.6px] text-[#b4b4b6] whitespace-nowrap">
          https://www.<span className="text-white">udemy.com</span>/the-data-science-course-complete-data-science-bootcamp/learn/v4/t/lecture/10764516?start=0
        </span>
        <div className="w-[91px] h-[30px] rounded-full border border-[#5f5f61] flex items-center justify-center text-[22px] text-white">150%</div>
        <div className="ml-[27px] w-px h-[42px] bg-[#6a6a6c]" />
        <Ellipsis className="ml-[24px]" size={32} color="#d2d2d3" strokeWidth={3} />
        <svg className="ml-[20px]" width="32" height="32" viewBox="0 0 32 32" fill="none" stroke="#d2d2d3" strokeWidth="3.5">
          <path d="M3 4h26v12a13 13 0 0 1-26 0z" /><path d="M10 13l6 6 6-6" />
        </svg>
        <Star className="ml-[22px]" size={32} color="#d2d2d3" strokeWidth={2.5} />
      </div>
      <div className="w-[12px]" />
      <Slot><Mail size={32} /></Slot>
      <Slot><Library size={34} /></Slot>
      <Slot><PanelLeft size={32} /></Slot>
      <Slot>
        <div className="w-[32px] h-[32px] rounded-full bg-[#14b36f] text-white text-[24px] font-bold flex items-center justify-center">G</div>
      </Slot>
      <Slot>
        <svg width="30" height="34" viewBox="0 0 30 34"><path d="M2 4l13-3 13 3v14c0 8-8 13-13 15C10 31 2 26 2 18z" fill="#800000" /></svg>
        <span className="absolute right-[4px] top-[6px] bg-[#5d5d5f] text-white text-[18px] leading-[24px] px-[3px]">12</span>
      </Slot>
      <Slot>
        <div className="w-[32px] h-[32px] bg-[#20232a] flex items-center justify-center">
          <svg width="28" height="28" viewBox="0 0 28 28" fill="none" stroke="#61dafb" strokeWidth="1.6">
            <ellipse cx="14" cy="14" rx="12" ry="5" /><ellipse cx="14" cy="14" rx="12" ry="5" transform="rotate(60 14 14)" /><ellipse cx="14" cy="14" rx="12" ry="5" transform="rotate(120 14 14)" /><circle cx="14" cy="14" r="2" fill="#61dafb" />
          </svg>
        </div>
      </Slot>
      <Slot>
        <div className="w-[32px] h-[32px] bg-[#cc0000] flex items-center justify-center">
          <svg width="22" height="26" viewBox="0 0 22 26"><path d="M6 24L17 6" stroke="#fff" strokeWidth="4" /></svg>
        </div>
      </Slot>
      <div className="ml-[5px] w-[55px] h-[56px] bg-[#8b8b8d] rounded-[5px] flex items-center justify-center">
        <FaExpandAlt size={30} color="#e8e8e8" />
      </div>
      <div className="ml-[11px] w-px h-[64px] bg-[#555557]" />
      <Menu className="ml-[22px]" size={36} color="#d2d2d3" strokeWidth={3} />
    </div>
  );
}

export default function App() {
  return (
    <div className="w-[3360px] h-[2100px] flex flex-col overflow-hidden bg-[#14171c]">
      <TabBar />
      <NavBar />
      <div className="h-[31px]" />
      <Video />
    </div>
  );
}
